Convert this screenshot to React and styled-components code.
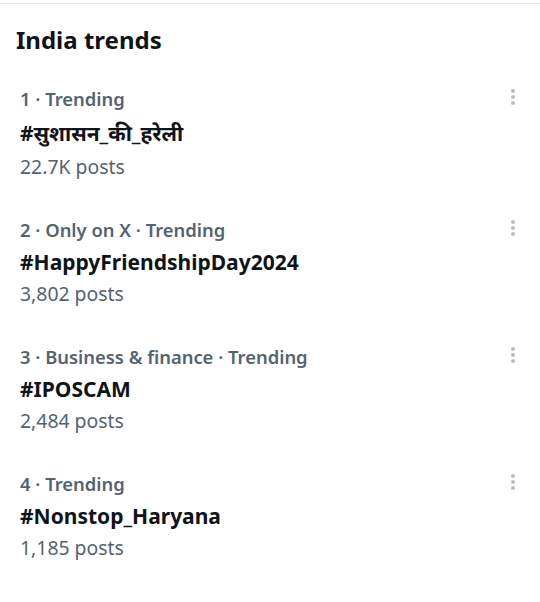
import React from "react";
import styled, { createGlobalStyle } from "styled-components";

const trends = [
  { rank: 1, meta: ["Trending"], name: "#सुशासन_की_हरेली", posts: "22.7K posts", deva: true },
  { rank: 2, meta: ["Only on X", "Trending"], name: "#HappyFriendshipDay2024", posts: "3,802 posts" },
  { rank: 3, meta: ["Business & finance", "Trending"], name: "#IPOSCAM", posts: "2,484 posts" },
  { rank: 4, meta: ["Trending"], name: "#Nonstop_Haryana", posts: "1,185 posts" },
];

const MoreIcon = () => (
  <svg width="20" height="20" viewBox="0 0 20 20">
    <rect x="8.2" y="2.2" width="3.6" height="3.6" rx="1" fill="#b9bcbf" />
    <rect x="8.2" y="8.2" width="3.6" height="3.6" rx="1" fill="#b9bcbf" />
    <rect x="8.2" y="14.2" width="3.6" height="3.6" rx="1" fill="#b9bcbf" />
  </svg>
);

const App = () => {
  return (
    <>
      <GlobalStyle />
      <Panel>
        <Header>India trends</Header>
        {trends.map((t) => (
          <Trend key={t.rank}>
            <MetaRow>
              <Meta>{[String(t.rank), ...t.meta].join(" · ")}</Meta>
              <MoreButton>
                <MoreIcon />
              </MoreButton>
            </MetaRow>
            <TrendName $deva={t.deva}>{t.name}</TrendName>
            <Posts>{t.posts}</Posts>
          </Trend>
        ))}
      </Panel>
    </>
  );
};

export default App;

const GlobalStyle = createGlobalStyle`
  body {
    margin: 0;
    background: #fff;
    font-family: "Noto Sans", "Noto Sans Devanagari", sans-serif;
    color: #0f1419;
  }
`;

const Panel = styled.div`
  margin-top: 3px;
  border-top: 1px solid #e7e9ea;
  width: 540px;
  height: 598px;
  overflow: hidden;
`;

const Header = styled.h2`
  margin: 0;
  padding: 20px 16px 11px;
  font-size: 24px;
  line-height: 32px;
  font-weight: 700;
  color: #0f1419;
`;

const Trend = styled.div`
  padding: 16px 17px 15px 20px;
`;

const MetaRow = styled.div`
  display: flex;
  justify-content: space-between;
  align-items: center;
  height: 32px;
`;

const Meta = styled.span`
  font-size: 18.4px;
  font-weight: 600;
  line-height: 32px;
  color: #536471;
`;

const MoreButton = styled.div`
  width: 20px;
  height: 20px;
  display: flex;
  align-items: center;
  justify-content: center;
  margin-top: -4px;
`;

const TrendName = styled.div`
  font-size: 21px;
  font-weight: 700;
  line-height: ${(p) => (p.$deva ? "36px" : "32px")};
  color: #0f1419;
`;

const Posts = styled.div`
  font-size: 19.4px;
  line-height: 32px;
  color: #536471;
`;
